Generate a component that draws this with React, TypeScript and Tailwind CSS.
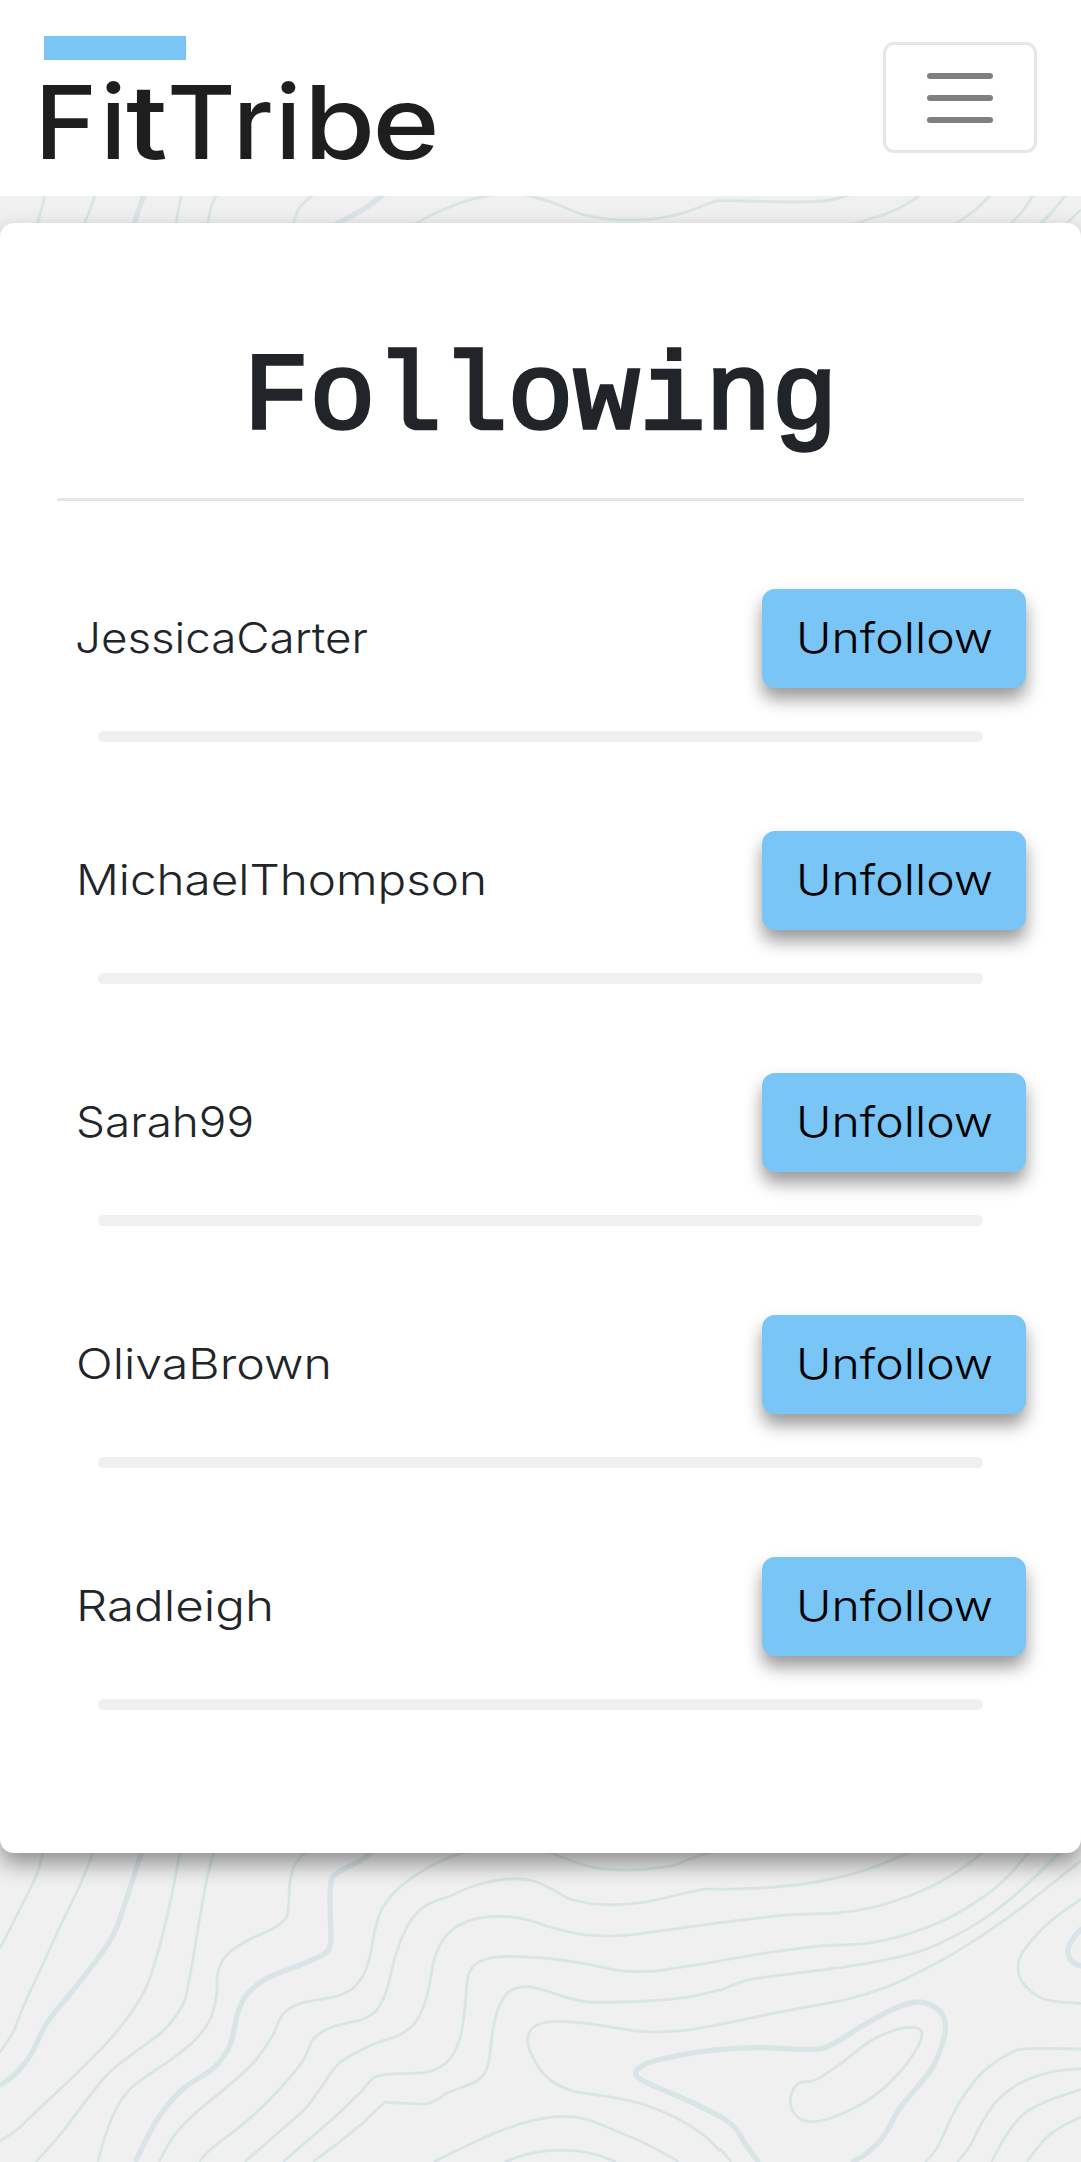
type Pt = [number, number];
type Line = { p: Pt[]; thick?: boolean };

const users = [
  { name: 'JessicaCarter', width: 293, left: 75 },
  { name: 'MichaelThompson', width: 411, left: 76 },
  { name: 'Sarah99', width: 178, left: 76 },
  { name: 'OlivaBrown', width: 256, left: 76 },
  { name: 'Radleigh', width: 198, left: 76 },
];

/* Smooth curve running through every point of a contour. */
function curve(p: Pt[]): string {
  let d = `M${p[0][0]} ${p[0][1]}`;
  for (let i = 0; i < p.length - 1; i++) {
    const a = p[i - 1] ?? p[i];
    const b = p[i];
    const c = p[i + 1];
    const e = p[i + 2] ?? c;
    d += `C${b[0] + (c[0] - a[0]) / 6} ${b[1] + (c[1] - a[1]) / 6} ${c[0] - (e[0] - b[0]) / 6} ${c[1] - (e[1] - b[1]) / 6} ${c[0]} ${c[1]}`;
  }
  return d;
}

const lowerLeft: Line[] = [
  { p: [[128, 60], [126, 80], [108, 138], [60, 237], [0, 355]] },
  { p: [[282, 60], [240, 165], [180, 290], [122, 417], [70, 530], [40, 605], [0, 667]] },
  { thick: true, p: [[426, 60], [385, 190], [342, 310], [290, 390], [210, 492], [140, 580], [92, 675], [50, 728], [0, 767]] },
  { p: [[541, 60], [510, 220], [470, 380], [430, 490], [350, 605], [250, 710], [100, 853], [50, 900], [0, 933]] },
  { p: [[643, 60], [618, 160], [590, 320], [566, 460], [548, 525], [490, 602], [400, 670], [325, 730], [260, 810], [180, 915], [108, 995]] },
  { p: [[920, 62], [887, 100], [870, 155], [866, 225], [857, 265], [820, 295], [740, 333], [680, 375], [653, 430], [650, 495], [630, 570], [580, 635], [500, 698], [400, 768], [350, 833], [315, 920], [294, 995]] },
  { thick: true, p: [[1130, 55], [1080, 92], [1005, 134], [991, 175], [991, 255], [992, 335], [975, 370], [900, 405], [800, 445], [740, 494], [713, 550], [690, 645], [640, 715], [545, 780], [470, 872], [406, 995]] },
  { p: [[1082, 448], [1055, 478], [1005, 500], [905, 519], [850, 551], [815, 622], [765, 693], [700, 755], [580, 855], [520, 920], [477, 995]] },
  { p: [[1080, 571], [990, 594], [940, 627], [910, 690], [850, 765], [750, 865], [630, 960], [598, 995]] },
  { p: [[1080, 661], [1015, 702], [970, 763], [920, 831], [850, 895], [735, 995]] },
  { p: [[1080, 788], [1000, 865], [850, 995]] },
  { p: [[1080, 885], [1020, 935], [940, 995]] },
];

const lowerMid: Line[] = [
  { p: [[330, 62], [250, 90], [175, 130], [105, 185], [65, 238], [45, 300], [32, 370], [17, 420], [0, 453]] },
  { p: [[555, 60], [610, 83], [690, 110], [780, 120], [860, 117], [940, 106], [1000, 83], [1060, 65]] },
  { p: [[0, 571], [48, 543], [80, 480], [110, 365], [150, 275], [200, 225], [270, 198], [350, 165], [445, 147], [520, 153], [580, 180], [640, 210], [740, 224], [850, 217], [950, 195], [1030, 178], [1080, 178]] },
  { p: [[0, 661], [55, 637], [120, 614], [170, 572], [203, 490], [225, 380], [265, 310], [330, 271], [420, 259], [500, 269], [580, 294], [670, 314], [780, 317], [900, 303], [1080, 278]] },
  { p: [[0, 790], [45, 742], [110, 731], [205, 726], [265, 692], [300, 625], [315, 530], [327, 430], [370, 390], [450, 379], [580, 387], [680, 402], [780, 422], [870, 424], [980, 409], [1080, 393]] },
  { p: [[0, 888], [70, 821], [90, 818], [205, 820], [265, 787], [350, 753], [384, 705], [397, 610], [415, 535], [450, 483], [500, 470], [550, 480], [630, 505], [700, 517], [860, 513], [980, 502], [1080, 480]] },
  { p: [[1080, 583], [970, 602], [840, 604], [700, 583], [600, 574], [530, 585], [503, 625], [520, 685], [565, 745], [635, 782], [750, 801], [850, 823], [950, 864], [1030, 915], [1080, 963]] },
  { thick: true, p: [[1082, 658], [1000, 669], [880, 694], [831, 720], [835, 743], [880, 767], [980, 810], [1082, 861]] },
  { p: [[222, 995], [330, 943], [430, 899], [530, 869], [610, 859], [680, 868], [770, 903], [870, 947], [955, 995]] },
  { p: [[434, 995], [500, 973], [570, 962], [650, 963], [710, 975], [768, 995]] },
];

const lowerRight: Line[] = [
  { p: [[0, 178], [120, 174], [250, 162], [370, 139], [470, 108], [580, 62]] },
  { p: [[0, 278], [190, 256], [350, 249], [450, 234], [550, 204], [650, 161], [730, 112], [798, 60]] },
  { p: [[0, 393], [130, 370], [290, 349], [440, 340], [560, 313], [680, 267], [790, 201], [860, 143], [930, 62]] },
  { p: [[0, 481], [85, 450], [200, 433], [400, 407], [580, 370], [680, 330], [790, 268], [880, 200], [950, 136], [1025, 60]] },
  { p: [[0, 584], [180, 546], [380, 508], [500, 471], [610, 420], [720, 359], [850, 273], [970, 182], [1083, 92]] },
  { p: [[1083, 207], [990, 275], [920, 350], [896, 395], [903, 450], [955, 500], [1010, 515], [1083, 520]] },
  { thick: true, p: [[1086, 294], [1053, 335], [1044, 365], [1056, 394], [1088, 410]] },
  { thick: true, p: [[0, 658], [120, 653], [280, 658], [340, 641], [430, 586], [520, 537], [590, 516], [640, 529], [672, 563], [673, 620], [640, 708], [600, 762], [540, 834], [490, 920], [440, 970], [395, 998]] },
  { p: [[270, 755], [300, 743], [370, 695], [450, 634], [520, 602], [580, 592], [605, 607], [594, 649], [550, 714], [490, 776], [420, 825], [340, 862], [280, 875], [235, 863], [212, 825], [217, 784], [240, 758], [270, 755]] },
  { thick: true, p: [[-4, 855], [45, 893], [75, 940], [116, 998]] },
  { p: [[0, 956], [34, 996]] },
  { p: [[1083, 657], [920, 656], [860, 675], [790, 725], [740, 785], [700, 850], [652, 953], [616, 996]] },
  { p: [[1083, 716], [990, 727], [900, 760], [830, 814], [785, 880], [750, 948], [712, 996]] },
  { p: [[1083, 778], [980, 814], [910, 853], [860, 914], [814, 996]] },
  { p: [[1083, 860], [990, 913], [920, 995]] },
];

const upperLeft: Line[] = [
  { p: [[128, 580], [125, 610], [107, 675]] },
  { p: [[279, 575], [265, 620], [243, 675]] },
  { thick: true, p: [[423, 575], [405, 622], [388, 678]] },
  { p: [[527, 580], [519, 625], [510, 675]] },
  { p: [[635, 575], [615, 615], [602, 675]] },
  { p: [[915, 580], [870, 622], [850, 675]] },
  { thick: true, p: [[1120, 578], [1060, 625], [970, 675]] },
  { p: [[1440, 584], [1370, 598], [1280, 632], [1200, 674]] },
  { p: [[1500, 580], [1568, 596], [1620, 614], [1690, 643], [1750, 655], [1815, 660], [1910, 655], [1990, 637], [2070, 606], [2110, 602], [2300, 606], [2400, 602], [2470, 584]] },
];

const upperRight: Line[] = [
  { p: [[1110, 580], [1030, 630], [910, 672]] },
  { p: [[1310, 580], [1265, 627], [1200, 675]] },
  { p: [[1432, 580], [1400, 632], [1360, 675]] },
  { p: [[1526, 580], [1490, 630], [1446, 675]] },
  { p: [[1568, 629], [1525, 672]] },
];

function Contours({ lines, place }: { lines: Line[]; place: string }) {
  return (
    <g transform={place}>
      {lines.map((l, i) => (
        <path key={i} d={curve(l.p)} strokeWidth={l.thick ? 5.3 : 2.8} vectorEffect="non-scaling-stroke" />
      ))}
    </g>
  );
}

function Topography() {
  return (
    <svg
      className="pointer-events-none absolute inset-0"
      width="1081"
      height="2162"
      viewBox="0 0 1081 2162"
      fill="none"
      stroke="#d9e4e6"
      aria-hidden="true"
    >
      <Contours lines={upperLeft} place="scale(.3444 .3333)" />
      <Contours lines={upperRight} place="translate(540 0) scale(.345 .3333)" />
      <Contours lines={lowerLeft} place="translate(0 1830) scale(.3333)" />
      <Contours lines={lowerMid} place="translate(360 1830) scale(.3333)" />
      <Contours lines={lowerRight} place="translate(720 1830) scale(.3333)" />
    </svg>
  );
}

function Logo() {
  return (
    <svg className="overflow-visible" width="400" height="160" viewBox="40 30 400 160" role="img" aria-label="FitTribe">
      <rect x="44" y="36" width="142" height="24" fill="#78c5f6" />
      <g fill="#1e1e1e" fontFamily="Inter, sans-serif" fontWeight="450" fontSize="102">
        <text transform="translate(34.5 159) scale(1.04 1)">F</text>
        <text transform="translate(100.500 159)">i</text>
        <text transform="translate(126 159) scale(1.2 1)">t</text>
        <text transform="translate(167 159) scale(1.03 1)">T</text>
        <text transform="translate(233 159)">r</text>
        <text transform="translate(275.500 159)">i</text>
        <text transform="translate(304 159) scale(1.13 1)">b</text>
        <text transform="translate(372.500 159) scale(1.12 1)">e</text>
      </g>
    </svg>
  );
}

function Label({ text, width }: { text: string; width: number }) {
  return (
    <svg className="block overflow-visible" width={width} height="54" aria-label={text}>
      <text
        x="0"
        y="42"
        textLength={width}
        lengthAdjust="spacingAndGlyphs"
        fontFamily="Inter, sans-serif"
        fontSize="42.500"
        fontWeight="350"
        fill="currentColor"
      >
        {text}
      </text>
    </svg>
  );
}

export default function App() {
  return (
    <div className="relative h-[2162px] w-[1081px] overflow-hidden bg-[#f0f0f0] font-['Inter',sans-serif] text-[#212529]">
      <Topography />
      <header className="relative flex h-[196px] items-start justify-between bg-white pt-[30px] pr-[44px] pl-[40px]">
        <Logo />
        <button
          aria-label="Menu"
          className="mt-3 flex h-[111px] w-[154px] flex-col items-center justify-center gap-4 rounded-[11px] border-[3px] border-[#e6e6e6]"
        >
          <span className="h-1.5 w-[66px] rounded-full bg-[#808080]" />
          <span className="h-1.5 w-[66px] rounded-full bg-[#808080]" />
          <span className="h-1.5 w-[66px] rounded-full bg-[#808080]" />
        </button>
      </header>

      <main className="relative mt-[27px] h-[1630px] rounded-[14px] bg-white shadow-[0_11px_22px_rgba(0,0,0,0.4)]">
        <div className="mx-[57px] h-[278px] border-b-[3px] border-[#e6e6e6] pt-[113px]">
          <h1 className="text-center font-['Liberation_Mono',monospace] text-[110px] leading-[125px] font-normal [-webkit-text-stroke:3.5px_#212529]">
            Following
          </h1>
        </div>
        <ul className="pt-[87px]">
          {users.map((u) => (
            <li key={u.name} className="h-[242px]">
              <div className="flex h-[100px] items-center justify-between pr-[55px]" style={{ paddingLeft: u.left }}>
                <Label text={u.name} width={u.width} />
                <button className="flex h-[99px] w-[264px] items-center justify-center rounded-[13px] bg-[#78c5f6] text-black shadow-[0_11px_17px_rgba(0,0,0,0.4)]">
                  <Label text="Unfollow" width={197} />
                </button>
              </div>
              <div className="mx-[98px] mt-[43px] h-[11px] rounded-full bg-[#f0f0f0]" />
            </li>
          ))}
        </ul>
      </main>
    </div>
  );
}
